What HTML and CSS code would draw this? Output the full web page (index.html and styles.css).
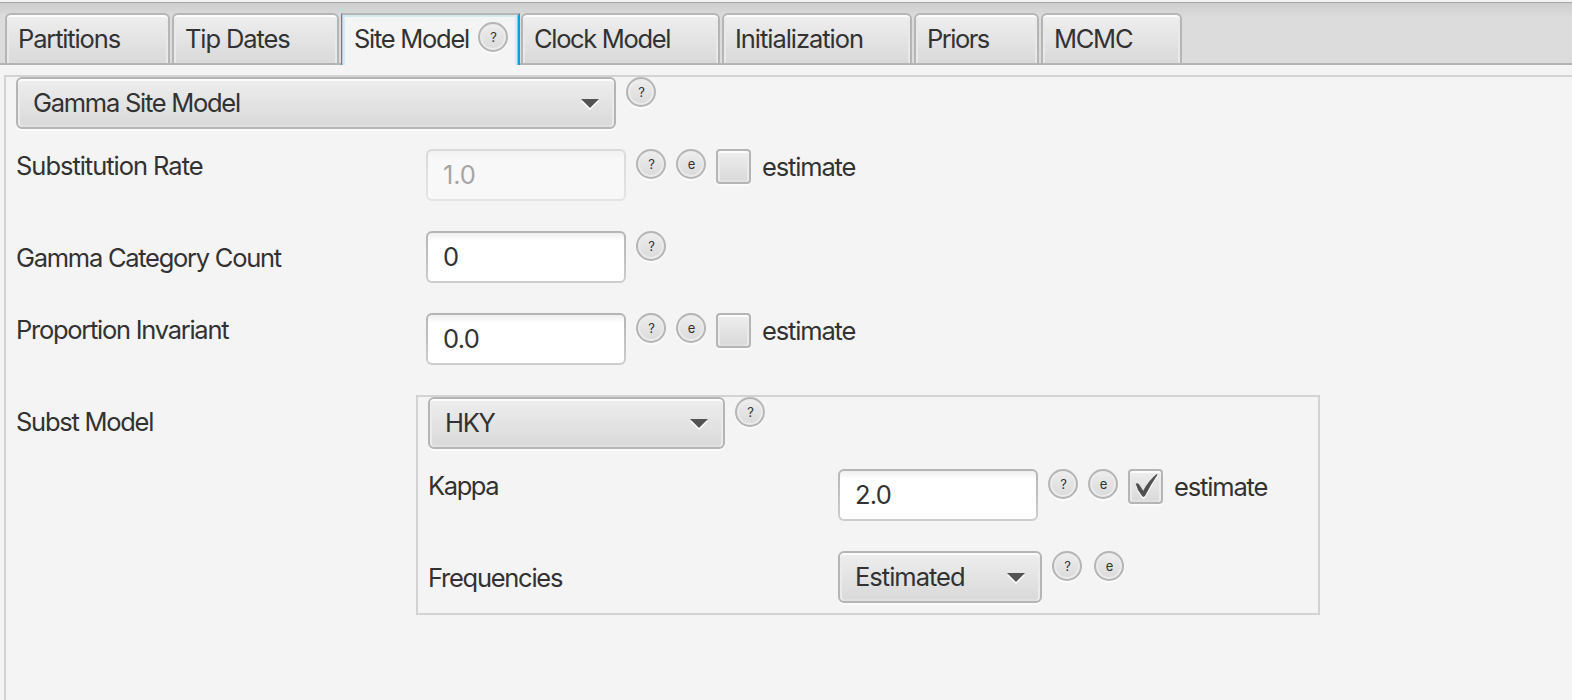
FILE: index.html
```html
<!DOCTYPE html>
<html lang="en">
<head>
<meta charset="utf-8">
<title>Site Model</title>
<link rel="stylesheet" href="styles.css">
</head>
<body>
<nav class="tabs">
  <div class="tab t-partitions"><span>Partitions</span></div>
  <div class="tab t-dates"><span>Tip Dates</span></div>
  <div class="tab active t-site"><span>Site Model</span><button class="round">?</button></div>
  <div class="tab t-clock"><span>Clock Model</span></div>
  <div class="tab t-init"><span>Initialization</span></div>
  <div class="tab t-priors"><span>Priors</span></div>
  <div class="tab t-mcmc"><span>MCMC</span></div>
</nav>
<main class="pane">
  <div class="row head">
    <div class="combo c-model"><span>Gamma Site Model</span><svg class="arrow" width="18" height="11" viewBox="0 0 18 11"><path d="M0 2H18L9 11Z" fill="#fff"/><path d="M0 0H18L9 9Z" fill="#535353"/></svg></div>
    <button class="round">?</button>
  </div>
  <div class="row">
    <label class="name w-rate">Substitution Rate</label>
    <div class="field disabled">1.0</div>
    <button class="round">?</button><button class="round">e</button>
    <div class="check"></div><span class="estimate">estimate</span>
  </div>
  <div class="row">
    <label class="name low">Gamma Category Count</label>
    <div class="field">0</div>
    <button class="round">?</button>
  </div>
  <div class="row">
    <label class="name">Proportion Invariant</label>
    <div class="field">0.0</div>
    <button class="round">?</button><button class="round">e</button>
    <div class="check"></div><span class="estimate">estimate</span>
  </div>
  <div class="row">
    <label class="name low subst">Subst Model</label>
    <section class="group">
      <div class="row head">
        <div class="combo c-hky"><span>HKY</span><svg class="arrow" width="18" height="11" viewBox="0 0 18 11"><path d="M0 2H18L9 11Z" fill="#fff"/><path d="M0 0H18L9 9Z" fill="#535353"/></svg></div>
        <button class="round">?</button>
      </div>
      <div class="row">
        <label class="name w-kappa">Kappa</label>
        <div class="field">2.0</div>
        <button class="round">?</button><button class="round">e</button>
        <div class="check"><svg width="23" height="25" viewBox="0 0 23 25"><path d="M0.700 11.500Q2 10 4 12L8.200 18.500Q14 7.500 21.500 2L22.500 2.500Q16 13 10.500 23.500Q8.500 26 6.700 23.500Q2 17.500 0.700 11.500Z" fill="#fafafa"/><path d="M0.700 9.800Q2.300 8.300 4 10.200L8.200 16.800Q14 6 21.700 0L22.500 0.700Q15.500 11 10.300 21.600Q8.500 24.200 6.700 21.600Q2.300 16.500 0.700 9.800Z" fill="#505050"/></svg></div><span class="estimate">estimate</span>
      </div>
      <div class="row">
        <label class="name low">Frequencies</label>
        <div class="combo c-freq"><span>Estimated</span><svg class="arrow" width="18" height="11" viewBox="0 0 18 11"><path d="M0 2H18L9 11Z" fill="#fff"/><path d="M0 0H18L9 9Z" fill="#535353"/></svg></div>
        <button class="round">?</button><button class="round apart">e</button>
      </div>
    </section>
  </div>
</main>
</body>
</html>
```
FILE: styles.css
```css
* { box-sizing: border-box; }
body {
  margin: 0;
  height: 700px;
  overflow: hidden;
  background: #f4f4f4;
  color: #323232;
  font-family: Inter, "Liberation Sans", sans-serif;
  font-size: 25.5px;
  line-height: 30px;
  letter-spacing: -1.27px;
  white-space: nowrap;
}
.tabs {
  display: flex;
  gap: 2px;
  margin-top: 2px;
  height: 63px;
  padding: 11px 0 0 5px;
  border-top: 1px solid #a6a6a6;
  background: linear-gradient(#b4b4b4, #b4b4b4) bottom / 100% 2px no-repeat,
    linear-gradient(#cdcdcd, #dcdcdc 14px, #dcdcdc);
}
.tab {
  height: 50px;
  margin-top: -1px;
  padding: 9px 0 0 11px;
  border: 2px solid #b5b5b5;
  border-bottom: 0;
  border-radius: 6px 6px 0 0;
  background: linear-gradient(#efefef, #d9d9d9);
  box-shadow: inset 0 2px #fdfdfd, inset 2px 0 #e9e9e9, inset -2px 0 #e9e9e9;
}
.t-partitions { width: 165px; letter-spacing: -1.15px; }
.t-dates { width: 167px; letter-spacing: -1.12px; }
.t-site { width: 179px; }
.t-clock { width: 199px; margin-left: -1px; letter-spacing: -1.33px; }
.t-init { width: 190px; letter-spacing: -1.04px; }
.t-priors { width: 125px; letter-spacing: -1.5px; }
.t-mcmc { width: 141px; }
.tab.active {
  display: flex;
  height: 52px;
  padding-left: 12px;
  border-width: 2px 2px 0 1px;
  border-radius: 0;
  border-left-color: #1b9dcc;
  border-right-color: #0ba3d4;
  background: #f4f4f4;
  box-shadow: inset 1px 0 #b9cbd2, inset -1px 0 #b9b9b9, inset 0 2px #d5ebf4, inset 3px 0 #d5ebf4, inset -3px 0 #d5ebf4;
}
.active .round { margin: -2px 0 0 9px; }
.round {
  flex: none;
  width: 30px;
  height: 30px;
  margin: 0 0 0 10px;
  padding: 0 0 0 1px;
  border: 2px solid #b5b5b5;
  border-radius: 50%;
  background: linear-gradient(#ededed, #dadada);
  box-shadow: inset 0 0 0 2px #ebebeb, inset 0 2px 1px #fafafa, 0 2px #fbfbfb;
  color: #323232;
  font: 13px/26px Inter, sans-serif;
  text-align: center;
}
.round.apart { margin-left: 12px; }
.pane {
  height: 640px;
  margin: 10px 0 0 4px;
  padding-left: 10px;
  border: solid #d3d3d3;
  border-width: 2px 0 0 2px;
}
.row { display: flex; height: 82px; align-items: flex-start; }
.row.head { height: 72px; }
.name { width: 410px; padding-top: 2px; }
.name.low { padding-top: 12px; }
.name.subst { width: 400px; }
.w-rate { letter-spacing: -1.03px; }
.w-kappa { letter-spacing: -1.4px; }
.combo, .check {
  border: 2px solid #b5b5b5;
  border-radius: 6px;
  background: linear-gradient(#eeeeee, #d9d9d9);
  box-shadow: inset 0 2px #fcfcfc, inset 2px 0 #ebebeb, inset -2px 0 #ebebeb, inset 0 -2px #e0e0e0, 0 2px #fbfbfb;
}
.combo {
  display: flex;
  justify-content: space-between;
  height: 52px;
  padding: 9px 15px 0 15px;
}
.arrow { margin-top: 11px; }
.c-model { width: 600px; }
.c-hky { width: 297px; }
.c-freq { width: 204px; letter-spacing: -1px; }
.field {
  width: 200px;
  height: 52px;
  padding: 9px 0 0 15px;
  border: 2px solid transparent;
  border-radius: 6px;
  background: linear-gradient(#efefef, #fff 8px) padding-box, linear-gradient(#b4b4b4, #cecece) border-box;
  letter-spacing: -.7px;
}
.field.disabled { opacity: .4; letter-spacing: -.1px; }
.check {
  width: 35px;
  height: 35px;
  margin-left: 10px;
  border-radius: 4px;
  padding: 3px 0 0 5px;
}
.check svg { display: block; }
.estimate { margin: 3px 0 0 11px; letter-spacing: -1.15px; }
.group {
  width: 904px;
  height: 220px;
  padding-left: 10px;
  border: 2px solid #d3d3d3;
}
```
